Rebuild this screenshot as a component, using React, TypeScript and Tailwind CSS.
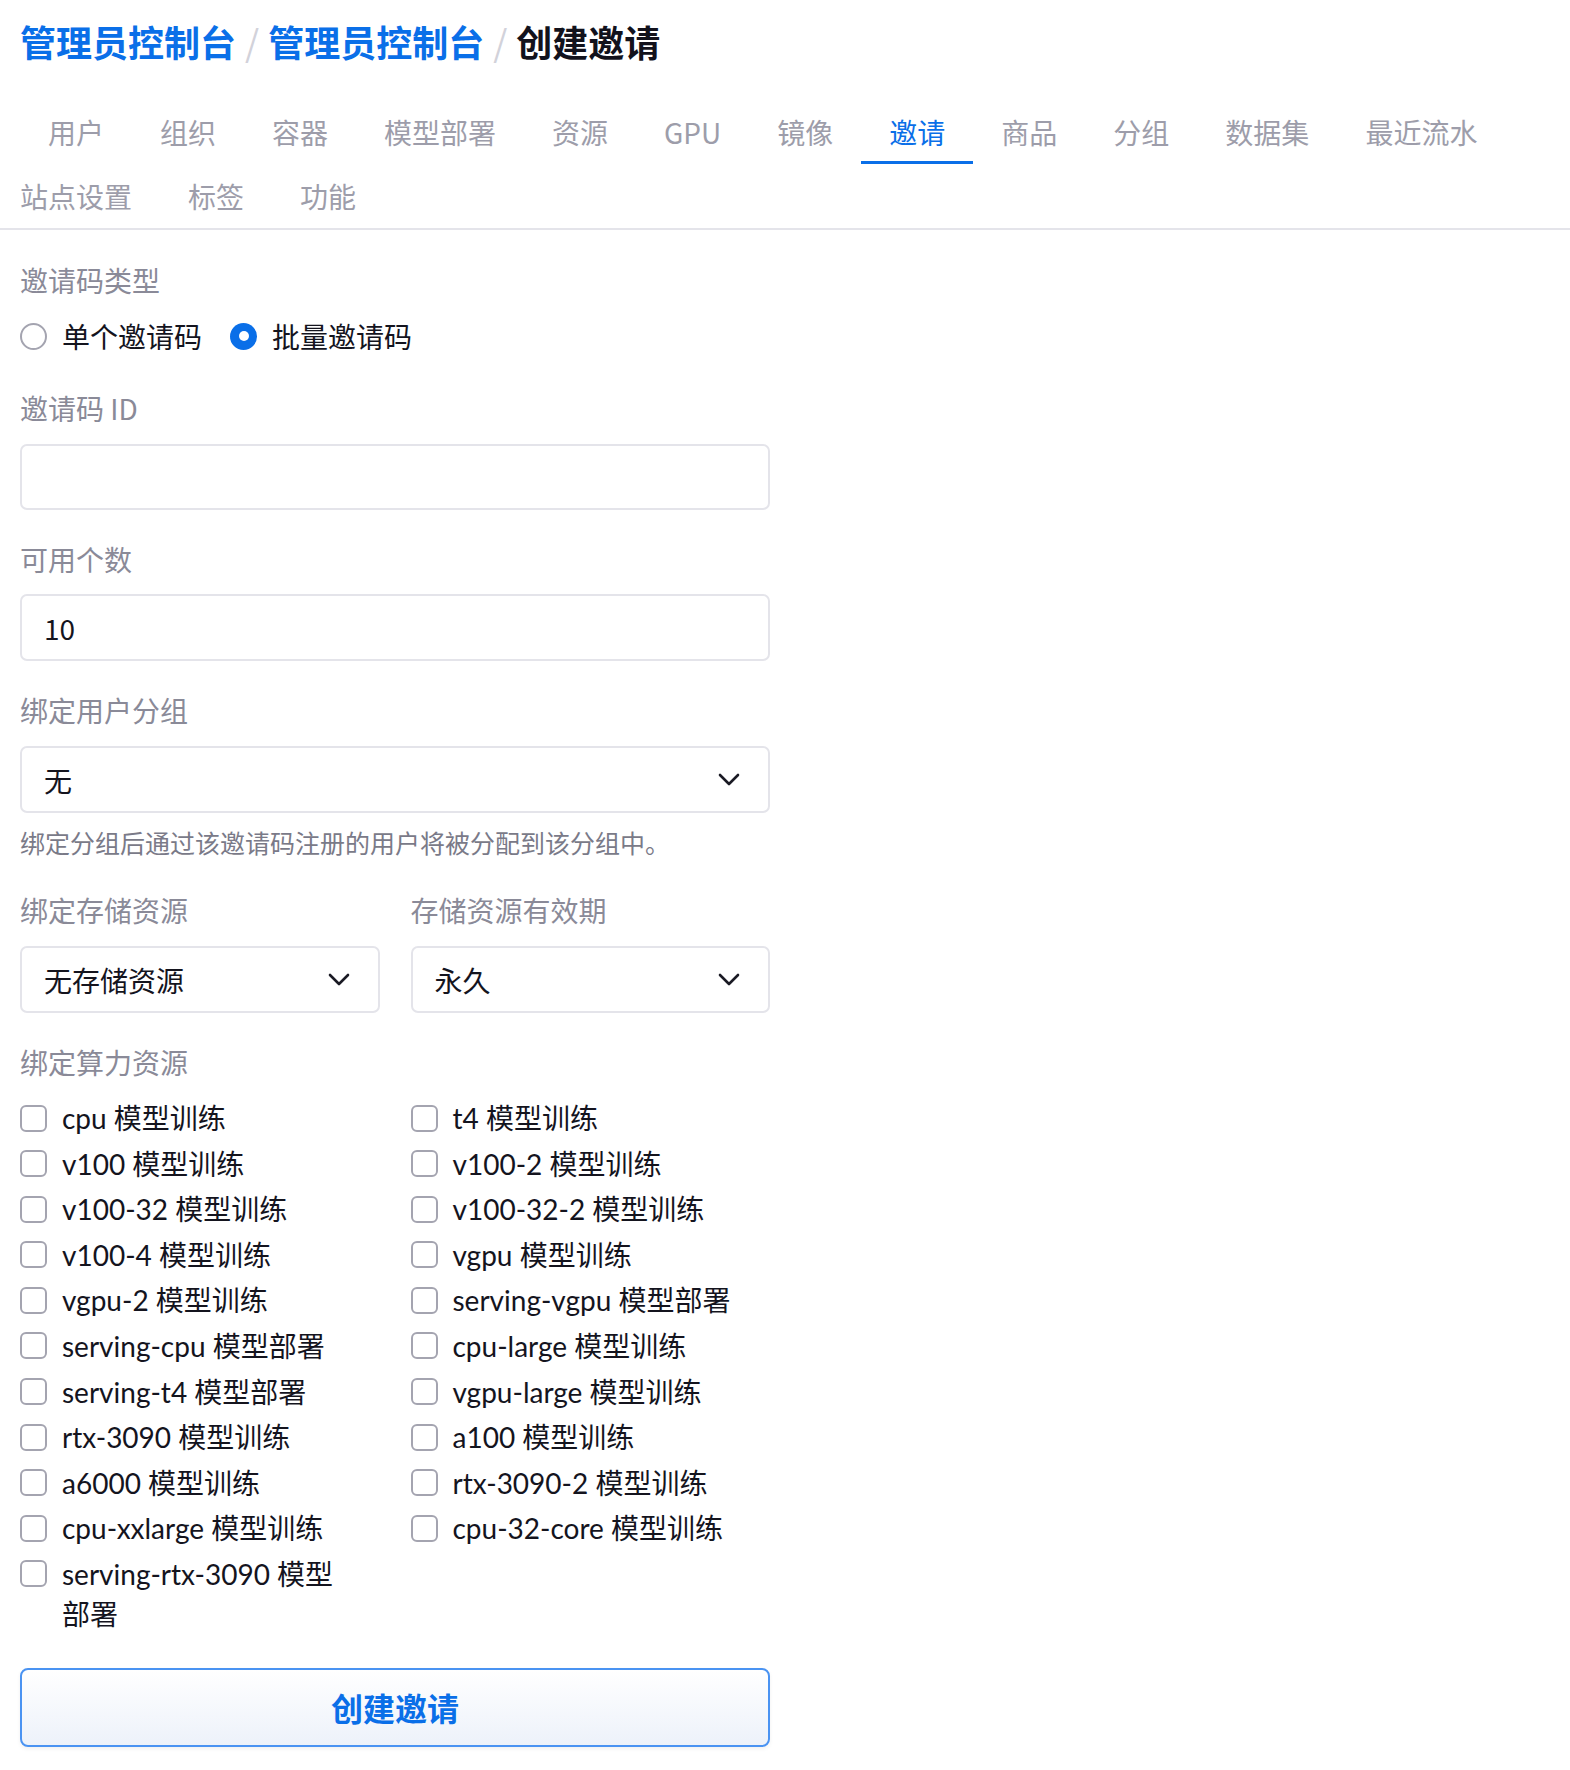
const tabsRow1 = ['用户', '组织', '容器', '模型部署', '资源', 'GPU', '镜像', '邀请', '商品', '分组', '数据集', '最近流水'];
const tabsRow2 = ['站点设置', '标签', '功能'];

const resources: string[] = [
  'cpu 模型训练',
  't4 模型训练',
  'v100 模型训练',
  'v100-2 模型训练',
  'v100-32 模型训练',
  'v100-32-2 模型训练',
  'v100-4 模型训练',
  'vgpu 模型训练',
  'vgpu-2 模型训练',
  'serving-vgpu 模型部署',
  'serving-cpu 模型部署',
  'cpu-large 模型训练',
  'serving-t4 模型部署',
  'vgpu-large 模型训练',
  'rtx-3090 模型训练',
  'a100 模型训练',
  'a6000 模型训练',
  'rtx-3090-2 模型训练',
  'cpu-xxlarge 模型训练',
  'cpu-32-core 模型训练',
];

function Chevron() {
  return (
    <svg width="22" height="13" viewBox="0 0 22 13" fill="none" className="shrink-0">
      <polyline points="2,2 11,11 20,2" stroke="#1a1a24" strokeWidth="2.6" strokeLinecap="round" strokeLinejoin="round" />
    </svg>
  );
}

function Label({ children }: { children: React.ReactNode }) {
  return <div className="text-[28px] leading-[40px] text-[#8a8a98]">{children}</div>;
}

function Select({ value }: { value: string }) {
  return (
    <div className="mt-[16px] flex h-[67px] items-center justify-between rounded-[7px] border-2 border-[#e4e4ea] bg-white pl-[22px] pr-[28px] text-[28px] text-[#14141e]">
      <span>{value}</span>
      <Chevron />
    </div>
  );
}

function Checkbox({ children }: { children: React.ReactNode }) {
  return (
    <label className="flex items-start gap-[15px] text-[28px] leading-[40px] text-[#14141e]">
      <span className="mt-[6.5px] h-[27px] w-[27px] shrink-0 rounded-[6px] border-2 border-[#a4a4b0] bg-white" />
      <span>{children}</span>
    </label>
  );
}

export default function App() {
  return (
    <div className="min-h-screen bg-white pt-[18px] font-['Noto_Sans_CJK_SC',sans-serif]">
      <div className="flex h-[46px] items-center pl-[20px] text-[36px] font-bold leading-[46px]">
        <span className="text-[#0a6fe8]">管理员控制台</span>
        <span className="mx-[9px] font-normal text-[#d2d2da]">/</span>
        <span className="text-[#0a6fe8]">管理员控制台</span>
        <span className="mx-[9px] font-normal text-[#d2d2da]">/</span>
        <span className="text-[#12121c]">创建邀请</span>
      </div>

      <div className="mt-[36px] border-b-2 border-[#e4e4ea] pl-[20px]">
        <div className="flex">
          {tabsRow1.map((t) => (
            <div
              key={t}
              className={
                t === '邀请'
                  ? 'flex h-[64px] items-center border-b-[3px] border-[#0a6fe8] px-[28px] pt-[3px] text-[28px] text-[#0a6fe8]'
                  : 'flex h-[64px] items-center px-[28px] text-[28px] text-[#9d9daa]'
              }
            >
              {t}
            </div>
          ))}
        </div>
        <div className="flex">
          {tabsRow2.map((t, i) => (
            <div
              key={t}
              className={
                i === 0
                  ? 'flex h-[64px] items-center pl-0 pr-[28px] text-[28px] text-[#9d9daa]'
                  : 'flex h-[64px] items-center px-[28px] text-[28px] text-[#9d9daa]'
              }
            >
              {t}
            </div>
          ))}
        </div>
      </div>

      <div className="flex w-[790px] flex-col px-[20px] pt-[30px]">
        <Label>邀请码类型</Label>
        <div className="mt-[16px] flex h-[40px] items-center gap-[28px] text-[28px] text-[#14141e]">
          <div className="flex items-center gap-[15px]">
            <span className="h-[27px] w-[27px] rounded-full border-2 border-[#a4a4b0] bg-white" />
            <span>单个邀请码</span>
          </div>
          <div className="flex items-center gap-[15px]">
            <span className="flex h-[27px] w-[27px] items-center justify-center rounded-full bg-[#0a6fe8]">
              <span className="h-[10px] w-[10px] rounded-full bg-white" />
            </span>
            <span>批量邀请码</span>
          </div>
        </div>

        <div className="mt-[32px]">
          <Label>邀请码 ID</Label>
          <div className="mt-[16px] h-[66px] rounded-[7px] border-2 border-[#e4e4ea] bg-white" />
        </div>

        <div className="mt-[29px]">
          <Label>可用个数</Label>
          <div className="mt-[15px] flex h-[67px] items-center rounded-[7px] border-2 border-[#e4e4ea] bg-white pl-[22px] text-[28px] text-[#14141e]">
            10
          </div>
        </div>

        <div className="mt-[29px]">
          <Label>绑定用户分组</Label>
          <Select value="无" />
          <p className="mt-[12px] text-[25px] leading-[34px] text-[#7a7a88]">绑定分组后通过该邀请码注册的用户将被分配到该分组中。</p>
        </div>

        <div className="mt-[31px] grid grid-cols-2 gap-x-[31px]">
          <div>
            <Label>绑定存储资源</Label>
            <Select value="无存储资源" />
          </div>
          <div>
            <Label>存储资源有效期</Label>
            <Select value="永久" />
          </div>
        </div>

        <div className="mt-[29px]">
          <Label>绑定算力资源</Label>
          <div className="mt-[16px] grid grid-cols-2 gap-x-[31px] gap-y-[5.6px] font-['Lato','Noto_Sans_CJK_SC',sans-serif]">
            {resources.map((r) => (
              <Checkbox key={r}>{r}</Checkbox>
            ))}
            <Checkbox>
              serving-rtx-3090 模型
              <br />
              部署
            </Checkbox>
          </div>
        </div>

        <button className="mt-[34px] flex h-[79px] items-center justify-center rounded-[8px] border-2 border-[#4a93f2] bg-gradient-to-b from-white to-[#edf2fa] text-[32px] font-bold text-[#0a6fe8] shadow-[0_2px_4px_rgba(0,0,0,0.06)]">
          创建邀请
        </button>
      </div>
    </div>
  );
}
